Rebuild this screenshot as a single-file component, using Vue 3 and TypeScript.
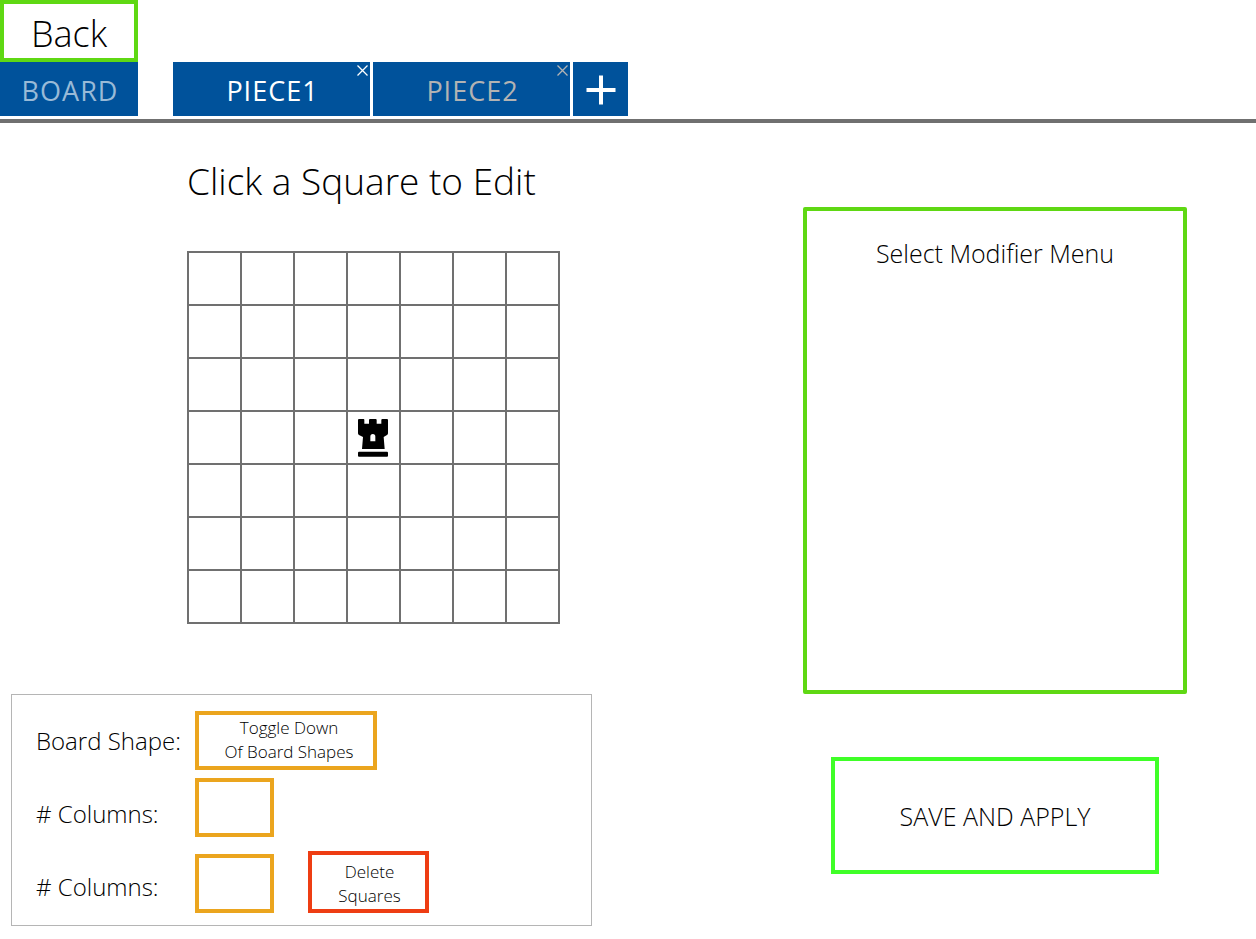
<script setup lang="ts">
import { computed, ref } from 'vue'

interface Piece {
  id: number
  name: string
}

const pieces = ref<Piece[]>([
  { id: 1, name: 'PIECE1' },
  { id: 2, name: 'PIECE2' },
])
const activeTab = ref<number>(1)

const boardSize = 7
const squares = computed(() => Array.from({ length: boardSize * boardSize }, (_, i) => i))
const centre = Math.floor((boardSize * boardSize) / 2)

const columns = ref('')
const rows = ref('')

function addPiece(): void {
  const id = Math.max(0, ...pieces.value.map((p) => p.id)) + 1
  pieces.value.push({ id, name: `PIECE${id}` })
}

function removePiece(id: number): void {
  pieces.value = pieces.value.filter((p) => p.id !== id)
}
</script>

<template>
  <div class="page">
    <header class="header">
      <button class="back" type="button">Back</button>
      <nav class="tabs">
        <button class="tab board-tab" :class="{ active: activeTab === 0 }" type="button" @click="activeTab = 0">BOARD</button>
        <div v-for="piece in pieces" :key="piece.id" class="piece" :class="{ active: activeTab === piece.id }">
          <button class="tab" type="button" @click="activeTab = piece.id">{{ piece.name }}</button>
          <button class="close" type="button" :aria-label="`Close ${piece.name}`" @click="removePiece(piece.id)">
            <svg viewBox="0 0 11 11" width="11" height="11" aria-hidden="true">
              <path d="M0.5 0.5L10.5 10.5M10.5 0.5L0.5 10.5" fill="none" stroke="currentColor" stroke-width="1.3" />
            </svg>
          </button>
        </div>
        <button class="add" type="button" aria-label="Add piece" @click="addPiece">
          <svg viewBox="0 0 30 30" width="30" height="30" aria-hidden="true">
            <path d="M15 0.5V29.5M0.5 15H29.5" fill="none" stroke="currentColor" stroke-width="4" />
          </svg>
        </button>
      </nav>
    </header>

    <main class="main">
      <section class="editor">
        <h1 class="title">Click a Square to Edit</h1>
        <div class="grid">
          <button v-for="i in squares" :key="i" class="square" type="button" :aria-label="`Square ${i + 1}`">
            <svg v-if="i === centre" viewBox="0 0 93 114" width="31" height="38" aria-hidden="true">
              <path
                fill="#000"
                fill-rule="evenodd"
                d="M3 0H17Q19 0 19 3V14H33V3Q33 0 36 0H53Q56 0 56 3V14H70V3Q70 0 73 0H87Q90 0 90 3V43Q90 46 87 48L77 54L80 90H12L15 54L3 48Q0 46 0 43V3Q0 0 3 0ZM37 67H52V53Q52 45 44.500 45Q37 45 37 53Z"
              />
              <rect x="0" y="98" width="90" height="15" rx="3" />
            </svg>
          </button>
        </div>
      </section>

      <section class="modifier">
        <h2 class="modifier-title">Select Modifier Menu</h2>
      </section>

      <form class="settings" @submit.prevent>
        <div class="labels">
          <label for="shape">Board Shape:</label>
          <label for="columns"># Columns:</label>
          <label for="rows"># Columns:</label>
        </div>
        <div class="controls">
          <button id="shape" class="shape" type="button" aria-haspopup="listbox">Toggle Down<br />Of Board Shapes</button>
          <input id="columns" v-model="columns" class="count" type="text" />
          <div class="control-row">
            <input id="rows" v-model="rows" class="count" type="text" />
            <button class="delete" type="button">Delete<br />Squares</button>
          </div>
        </div>
      </form>

      <button class="save" type="button">SAVE AND APPLY</button>
    </main>
  </div>
</template>

<style>
body {
  margin: 0;
  background: #fff;
}
</style>

<style scoped>
.page {
  font-family: 'Open Sans', 'Noto Sans', sans-serif;
  font-weight: 300;
  color: #000;
}

.page *,
.page {
  box-sizing: border-box;
}

button,
input {
  margin: 0;
  padding: 0;
  border: 0;
  border-radius: 0;
  background: #fff;
  color: inherit;
  font: inherit;
}

button {
  cursor: pointer;
}

.header {
  padding-bottom: 3px;
  border-bottom: 4px solid #707070;
}

.back {
  display: block;
  width: 138px;
  height: 62px;
  padding-top: 6px;
  border: 4px solid #5fd813;
  font-size: 36px;
  line-height: 48px;
}

.tabs {
  display: flex;
  gap: 3px;
  height: 54px;
}

.tab {
  width: 100%;
  height: 100%;
  padding: 2px 0 0 2px;
  background: #00529b;
  color: #b3b3b3;
  font-size: 27px;
  font-weight: 400;
  letter-spacing: 1px;
}

.board-tab {
  width: 138px;
  margin-right: 32px;
  color: #99bad7;
}

.piece {
  position: relative;
  width: 197px;
  color: #b3b3b3;
}

.active,
.active .tab {
  color: #fff;
}

.close {
  position: absolute;
  top: 3px;
  right: 2px;
  display: flex;
  background: none;
}

.add {
  display: flex;
  align-items: center;
  justify-content: center;
  width: 55px;
  padding-top: 2px;
  background: #00529b;
  color: #fff;
}

.main {
  display: grid;
  grid-template-columns: 581fr 384fr;
  align-items: start;
  column-gap: 211px;
  padding: 0 69px 13px 11px;
}

.editor {
  padding: 32px 0 70px 176px;
}

.title {
  margin: 0 0 44px;
  font-size: 37px;
  font-weight: 300;
  line-height: 52px;
  white-space: nowrap;
}

.grid {
  display: grid;
  grid-template-columns: repeat(7, 51px);
  grid-auto-rows: 51px;
  gap: 2px;
  width: max-content;
  padding: 2px;
  background: #707070;
}

.square {
  display: flex;
  align-items: center;
  justify-content: center;
}

.modifier {
  min-height: 487px;
  margin-top: 84px;
  border: 4px solid #5fd813;
  border-radius: 2px;
  text-align: center;
}

.modifier-title {
  margin: 26px 0 0;
  font-size: 25px;
  font-weight: 300;
  line-height: 32px;
}

.settings {
  display: flex;
  align-items: flex-start;
  padding: 16px 24px 12px;
  border: 1px solid #b5b5b5;
}

.labels {
  display: flex;
  flex-direction: column;
  width: 159px;
  margin: -7px 0 -12px;
  font-size: 24px;
  line-height: 73px;
  white-space: nowrap;
}

.controls {
  display: flex;
  flex-direction: column;
  align-items: flex-start;
}

.shape,
.count {
  height: 59px;
  border: 4px solid #eba51e;
}

.shape {
  width: 182px;
  padding: 0 0 1px 6px;
  font-size: 17px;
  line-height: 24px;
}

.count {
  width: 79px;
  padding: 0 8px;
  font-size: 24px;
}

.shape + .count {
  margin-top: 8px;
}

.control-row {
  display: flex;
  align-items: flex-end;
  gap: 34px;
  margin-top: 14px;
}

.delete {
  width: 121px;
  height: 62px;
  padding: 3px 0 0 2px;
  border: 4px solid #ee3d13;
  font-size: 17px;
  line-height: 24px;
}

.save {
  height: 117px;
  margin: 63px 28px 0;
  border: 4px solid #3fff28;
  font-size: 25px;
}
</style>
